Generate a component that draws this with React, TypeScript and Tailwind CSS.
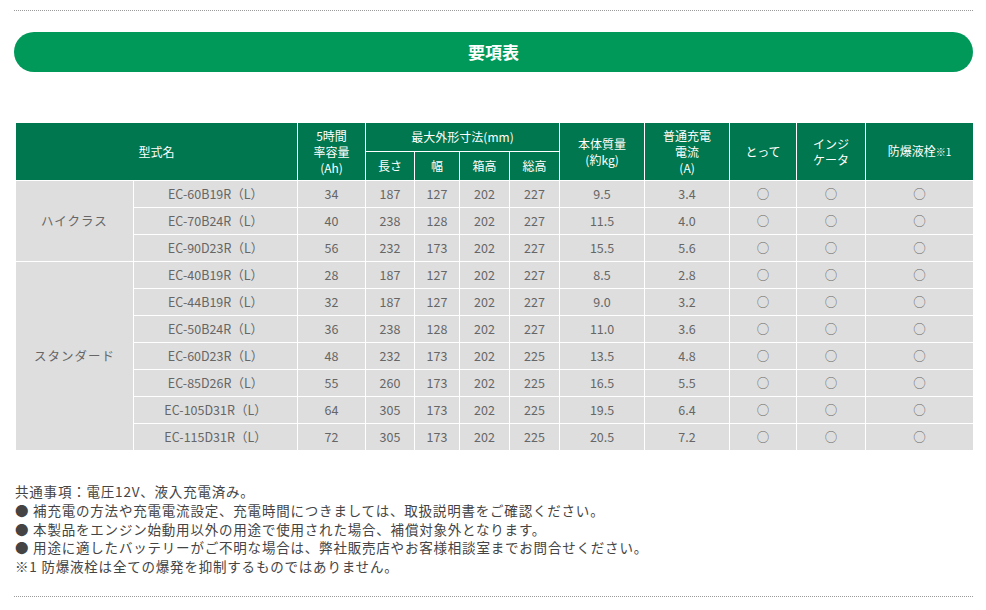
import React from 'react';

type Row = {
  name: string;
  ah: string;
  len: string;
  width: string;
  box: string;
  total: string;
  kg: string;
  amp: string;
};

const highClass: Row[] = [
  { name: 'EC-60B19R（L）', ah: '34', len: '187', width: '127', box: '202', total: '227', kg: '9.5', amp: '3.4' },
  { name: 'EC-70B24R（L）', ah: '40', len: '238', width: '128', box: '202', total: '227', kg: '11.5', amp: '4.0' },
  { name: 'EC-90D23R（L）', ah: '56', len: '232', width: '173', box: '202', total: '227', kg: '15.5', amp: '5.6' },
];

const standard: Row[] = [
  { name: 'EC-40B19R（L）', ah: '28', len: '187', width: '127', box: '202', total: '227', kg: '8.5', amp: '2.8' },
  { name: 'EC-44B19R（L）', ah: '32', len: '187', width: '127', box: '202', total: '227', kg: '9.0', amp: '3.2' },
  { name: 'EC-50B24R（L）', ah: '36', len: '238', width: '128', box: '202', total: '227', kg: '11.0', amp: '3.6' },
  { name: 'EC-60D23R（L）', ah: '48', len: '232', width: '173', box: '202', total: '225', kg: '13.5', amp: '4.8' },
  { name: 'EC-85D26R（L）', ah: '55', len: '260', width: '173', box: '202', total: '225', kg: '16.5', amp: '5.5' },
  { name: 'EC-105D31R（L）', ah: '64', len: '305', width: '173', box: '202', total: '225', kg: '19.5', amp: '6.4' },
  { name: 'EC-115D31R（L）', ah: '72', len: '305', width: '173', box: '202', total: '225', kg: '20.5', amp: '7.2' },
];

const th = 'border border-white bg-[#00774f] text-white font-normal text-[12px] leading-[16px] text-center align-middle p-0';
const td = 'border border-white bg-[#dedede] text-[#666] text-[12.5px] text-center align-middle h-[27px] p-0';

const Group: React.FC<{ label: string; rows: Row[] }> = ({ label, rows }) => (
  <>
    {rows.map((r, i) => (
      <tr key={r.name}>
        {i === 0 && (
          <td rowSpan={rows.length} className={`${td} tracking-[1px]`}>
            {label}
          </td>
        )}
        <td className={td}>{r.name}</td>
        <td className={td}>{r.ah}</td>
        <td className={td}>{r.len}</td>
        <td className={td}>{r.width}</td>
        <td className={td}>{r.box}</td>
        <td className={td}>{r.total}</td>
        <td className={td}>{r.kg}</td>
        <td className={td}>{r.amp}</td>
        <td className={td}>○</td>
        <td className={td}>○</td>
        <td className={td}>○</td>
      </tr>
    ))}
  </>
);

const App: React.FC = () => {
  return (
    <div
      className="w-[986px] bg-white px-[14px] pt-[10px]"
      style={{ fontFamily: '"Noto Sans CJK JP", "Noto Sans", sans-serif' }}
    >
      <div className="border-t border-dotted border-[#9a9a9a] mr-[-1px]" />

      <div className="mt-[21px] h-[40px] rounded-full bg-[#00995a] flex items-center justify-center mr-[-1px]">
        <h2 className="text-white font-bold text-[17px]">要項表</h2>
      </div>

      <table className="mt-[50px] ml-[1px] w-[958px] table-fixed border-collapse">
        <colgroup>
          <col className="w-[118px]" />
          <col className="w-[164px]" />
          <col className="w-[68px]" />
          <col className="w-[49px]" />
          <col className="w-[45px]" />
          <col className="w-[50px]" />
          <col className="w-[50px]" />
          <col className="w-[85px]" />
          <col className="w-[85px]" />
          <col className="w-[67px]" />
          <col className="w-[69px]" />
          <col className="w-[108px]" />
        </colgroup>
        <thead>
          <tr className="h-[29px]">
            <th colSpan={2} rowSpan={2} className={th}>型式名</th>
            <th rowSpan={2} className={th}>5時間<br />率容量<br />(Ah)</th>
            <th colSpan={4} className={th}>最大外形寸法(mm)</th>
            <th rowSpan={2} className={th}>本体質量<br />(約kg)</th>
            <th rowSpan={2} className={th}>普通充電<br />電流<br />(A)</th>
            <th rowSpan={2} className={th}>とって</th>
            <th rowSpan={2} className={th}>インジ<br />ケータ</th>
            <th rowSpan={2} className={th}>防爆液栓<span className="text-[10px]">※1</span></th>
          </tr>
          <tr className="h-[29px]">
            <th className={th}>長さ</th>
            <th className={th}>幅</th>
            <th className={th}>箱高</th>
            <th className={th}>総高</th>
          </tr>
        </thead>
        <tbody>
          <Group label="ハイクラス" rows={highClass} />
          <Group label="スタンダード" rows={standard} />
        </tbody>
      </table>

      <div className="mt-[31px] ml-[1px] text-[13.5px] tracking-[0.8px] leading-[18.75px] text-[#444]">
        <p>共通事項：電圧12V、液入充電済み。</p>
        <p>● 補充電の方法や充電電流設定、充電時間につきましては、取扱説明書をご確認ください。</p>
        <p>● 本製品をエンジン始動用以外の用途で使用された場合、補償対象外となります。</p>
        <p>● 用途に適したバッテリーがご不明な場合は、弊社販売店やお客様相談室までお問合せください。</p>
        <p>※1 防爆液栓は全ての爆発を抑制するものではありません。</p>
      </div>

      <div className="mt-[20px] border-t border-dotted border-[#9a9a9a] mr-[-1px]" />
      <div className="h-[12px]" />
    </div>
  );
};

export default App;
